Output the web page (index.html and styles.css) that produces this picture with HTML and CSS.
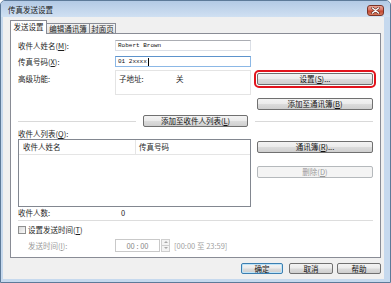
FILE: index.html
```html
<!DOCTYPE html>
<html lang="zh-CN">
<head>
	<meta charset="UTF-8">
	<title>传真发送设置</title>
	<link rel="stylesheet" href="styles.css">
</head>
<body>
	<div class="window">
		<div class="titlebar">
			<span class="title">传真发送设置</span>
			<span class="close">
				<svg width="9" height="7" viewBox="0 0 9 7">
					<path d="M1.5 1 L7.5 6 M7.5 1 L1.5 6" stroke="#5a2a22" stroke-width="2.4" stroke-linecap="round"/>
					<path d="M1.5 1 L7.5 6 M7.5 1 L1.5 6" stroke="#fff" stroke-width="1.4" stroke-linecap="round"/>
				</svg>
			</span>
		</div>

		<div class="client">
			<div class="tabs">
				<div class="tab active">发送设置</div>
				<div class="tab t2">编辑通讯簿</div>
				<div class="tab t3">封面页</div>
			</div>

			<div class="panel">
				<div class="row r1">
					<span class="lbl">收件人姓名(<u>M</u>):</span>
					<div class="field mono">Robert Brown</div>
				</div>
				<div class="row r2">
					<span class="lbl">传真号码(<u>X</u>):</span>
					<div class="field mono focus">01 2xxxx<i class="caret"></i></div>
				</div>
				<div class="row r3">
					<span class="lbl top">高级功能:</span>
					<div class="advbox"><span class="sub">子地址:</span><span>关</span></div>
					<div class="side">
						<div class="ring"><button class="btn">设置(<u>S</u>)...</button></div>
						<button class="btn second">添加至通讯簿(<u>B</u>)</button>
					</div>
				</div>

				<div class="sep">
					<span class="line"></span>
					<button class="btn mid">添加至收件人列表(<u>L</u>)</button>
					<span class="line"></span>
				</div>

				<div class="list-title">收件人列表(<u>Q</u>):</div>
				<div class="row r-list">
					<div class="list">
						<div class="list-head">
							<span class="col1">收件人姓名</span>
							<span class="col2">传真号码</span>
						</div>
					</div>
					<div class="side">
						<button class="btn">通讯簿(<u>R</u>)...</button>
						<button class="btn del" disabled>删除(<u>D</u>)</button>
					</div>
				</div>

				<div class="row r-count">
					<span class="lbl">收件人数:</span>
					<span class="count">0</span>
				</div>
				<div class="hr"></div>

				<div class="check-row"><span class="checkbox"></span>设置发送时间(<u>T</u>)</div>
				<div class="row r-time">
					<span class="lbl indent">发送时间(<u>I</u>):</span>
					<div class="timebox">00 : 00</div>
					<div class="spin">
						<span class="up"></span>
						<span class="down"></span>
					</div>
					<span class="range">[00:00 至 23:59]</span>
				</div>
			</div>

			<div class="footer">
				<button class="btn default">确定</button>
				<button class="btn">取消</button>
				<button class="btn">帮助</button>
			</div>
		</div>
	</div>
</body>
</html>
```

FILE: styles.css
```css
* {
	margin: 0;
	padding: 0;
	box-sizing: border-box;
}
body {
	width: 391px;
	height: 283px;
	overflow: hidden;
	font-family: "Noto Sans CJK SC", "Noto Sans", sans-serif;
	font-size: 7.5px;
	color: #1e1e1e;
}
u {
	text-decoration: underline;
}
.window {
	width: 391px;
	height: 283px;
	border: 1px solid #5d7a99;
	border-radius: 5px 5px 0 0;
	background: #c6d9ee;
	display: flex;
	flex-direction: column;
}
.titlebar {
	height: 16px;
	flex: none;
	display: flex;
	align-items: flex-start;
	padding: 0 6px 0 7px;
	border-radius: 4px 4px 0 0;
	background: linear-gradient(#b3cae5, #d0e0f2);
}
.title {
	line-height: 18px;
	color: #222;
}
.close {
	margin-left: auto;
	margin-top: 4px;
	width: 17px;
	height: 11px;
	border: 1px solid #7a3428;
	border-radius: 3px;
	background: linear-gradient(#eaa596, #d87462 45%, #c5452f 55%, #d57b5f);
	display: flex;
	align-items: center;
	justify-content: center;
}
.client {
	height: 262px;
	flex: none;
	margin: 0 6px 0 2px;
	padding: 0 3px 0 7px;
	background: #f0f0f0;
	display: flex;
	flex-direction: column;
}

/* tabs */
.tabs {
	height: 16px;
	flex: none;
	display: flex;
	align-items: flex-end;
}
.tab {
	height: 10px;
	line-height: 10px;
	text-align: center;
	border: 1px solid #898c95;
	border-bottom: none;
	background: linear-gradient(#f4f4f4, #e1e1e1);
	margin-right: -1px;
}
.tab.active {
	position: relative;
	z-index: 1;
	width: 37px;
	height: 14px;
	line-height: 12px;
	margin-bottom: -1px;
	background: #fff;
}
.t2 {
	width: 44px;
}
.t3 {
	width: 27px;
}
.panel {
	height: 225px;
	flex: none;
	background: #fff;
	border: 1px solid #898c95;
	padding: 0 7px;
}

/* rows */
.row {
	display: flex;
	align-items: flex-start;
}
.lbl {
	width: 97px;
	flex: none;
	line-height: 11px;
}
.r1 {
	margin-top: 6px;
}
.r2 {
	margin-top: 5px;
}
.r3 {
	margin-top: 3px;
}
.field {
	width: 136px;
	height: 11px;
	border: 1px solid #dbdfe6;
	border-top-color: #abadb3;
	background: #fff;
	padding-left: 2px;
	line-height: 9px;
	display: flex;
	align-items: center;
}
.mono {
	font-family: "Liberation Mono", monospace;
	font-size: 6px;
	color: #111;
}
.field.focus {
	border-color: #8cb8e6;
	border-top-color: #5d93cc;
}
.caret {
	display: inline-block;
	width: 1px;
	height: 8px;
	background: #000;
	margin-left: 1px;
}
.lbl.top {
	padding-top: 4px;
	line-height: 10px;
}
.advbox {
	width: 136px;
	height: 25px;
	border: 1px solid #e4e4e4;
	padding: 3px 0 0 3px;
	line-height: 10px;
}
.sub {
	display: inline-block;
	width: 57px;
}
.side {
	width: 116px;
	margin-left: 6px;
	flex: none;
	display: flex;
	flex-direction: column;
}
.ring {
	margin: 0 -3px;
	padding: 1px;
	border: 2px solid #e2141c;
	border-radius: 5px;
}

/* buttons */
.btn {
	display: block;
	width: 116px;
	height: 12px;
	font-family: inherit;
	font-size: 7.5px;
	line-height: 10px;
	color: #111;
	text-align: center;
	border: 1px solid #707070;
	border-radius: 2px;
	background: linear-gradient(#f3f3f3 0%, #ebebeb 48%, #dcdcdc 52%, #cfcfcf 100%);
}
.side .second {
	margin-top: 10px;
}
.sep {
	margin-top: 5px;
	height: 12px;
	display: flex;
	align-items: center;
	gap: 7px;
}
.line {
	flex: 1;
	height: 1px;
	background: #d9d9d9;
}
.btn.mid {
	width: 105px;
	flex: none;
}
.list-title {
	margin-top: 2px;
	height: 10px;
	line-height: 10px;
}
.list {
	width: 234px;
	height: 68px;
	border: 1px solid #828790;
	background: #fff;
}
.list-head {
	height: 15px;
	line-height: 14px;
	display: flex;
	border-bottom: 1px solid #e5e5e5;
}
.col1 {
	width: 117px;
	padding-left: 4px;
	border-right: 1px solid #e5e5e5;
}
.col2 {
	padding-left: 3px;
}
.r-list .side {
	padding-top: 2px;
}
.btn.del {
	margin-top: 13px;
	border-color: #b5b9bc;
	background: #f4f4f4;
	color: #9a9a9a;
}
.r-count {
	margin-top: 1px;
	height: 10px;
}
.r-count .lbl {
	line-height: 10px;
}
.count {
	padding-left: 6px;
	line-height: 10px;
}
.hr {
	margin-top: 2px;
	height: 1px;
	background: #dddddd;
}
.check-row {
	margin-top: 4px;
	height: 10px;
	line-height: 10px;
	display: flex;
	align-items: center;
}
.checkbox {
	width: 8px;
	height: 8px;
	margin-right: 2px;
	border: 1px solid #8e8f8f;
	background: linear-gradient(135deg, #d8d8d8, #fafafa);
}
.r-time {
	margin-top: 4px;
	height: 13px;
	align-items: center;
}
.lbl.indent {
	padding-left: 10px;
	color: #9b9b9b;
}
.timebox {
	width: 45px;
	height: 13px;
	border: 1px solid #c9c9c9;
	line-height: 11px;
	text-align: center;
	color: #8a8a8a;
}
.spin {
	width: 9px;
	height: 13px;
	margin-left: 1px;
	display: flex;
	flex-direction: column;
}
.spin span {
	flex: 1;
	border: 1px solid #cfcfcf;
	background: #f4f4f4;
	position: relative;
}
.spin .down {
	border-top: none;
}
.spin .up::after,
.spin .down::after {
	content: "";
	position: absolute;
	left: 2px;
	top: 1px;
	border: 2px solid transparent;
}
.spin .up::after {
	border-bottom: 2px solid #a8a8a8;
	top: -1px;
}
.spin .down::after {
	border-top: 2px solid #a8a8a8;
	top: 1px;
}
.range {
	margin-left: 4px;
	color: #a2a2a2;
}

/* bottom buttons */
.footer {
	margin-top: 5px;
	display: flex;
	justify-content: flex-end;
	gap: 4px;
}
.footer .btn {
	width: 44px;
	height: 11px;
	line-height: 9px;
}
.footer .default {
	width: 42px;
	margin-right: 2px;
	border-color: #3c7fb1;
	box-shadow: inset 0 0 0 1px #bfe4f8;
}
```
